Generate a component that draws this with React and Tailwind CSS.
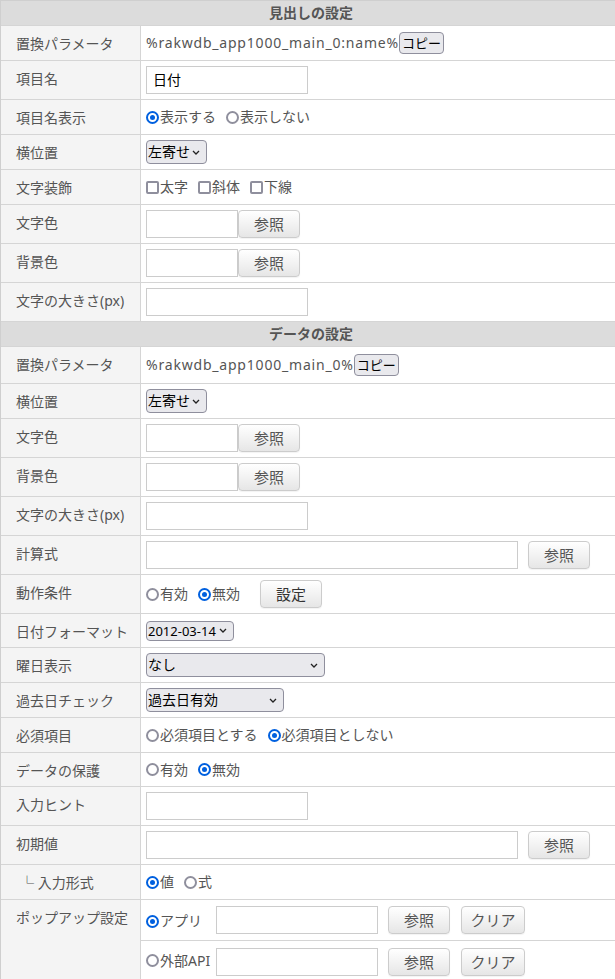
import React from 'react';

const Row = ({ label, h, indent, children }) => {
  return (
    <div className={`flex border-b border-[#d5d5d5] ${h}`}>
      <div className={`w-[140px] shrink-0 border-r border-[#d5d5d5] bg-[#f4f4f4] pt-[8px] leading-[20px] text-[#555] ${indent ? 'pl-[19px]' : 'pl-[15px]'}`}>
        {label}
      </div>
      <div className="flex flex-1 items-center px-[5px] text-[#555]">{children}</div>
    </div>
  );
};

const Header = ({ title }) => (
  <div className="flex h-[25px] items-center justify-center border-b border-[#d5d5d5] bg-[#dcdcdc] font-bold text-[#555]">
    {title}
  </div>
);

const Radio = ({ checked, label }) => (
  <span className="inline-flex items-center">
    {checked ? (
      <span className="flex size-[13px] items-center justify-center rounded-full border-2 border-[#0060df] bg-white">
        <span className="size-[5px] rounded-full bg-[#0060df]" />
      </span>
    ) : (
      <span className="size-[13px] rounded-full border-2 border-[#8f8f9d] bg-white" />
    )}
    <span className="ml-[1px]">{label}</span>
  </span>
);

const Check = ({ label }) => (
  <span className="inline-flex items-center">
    <span className="size-[13px] rounded-[2px] border-2 border-[#8f8f9d] bg-white" />
    <span className="ml-[1px]">{label}</span>
  </span>
);

const Chevron = () => (
  <svg width="8" height="5" viewBox="0 0 8 5" fill="none" stroke="#222" strokeWidth="1.3">
    <path d="M1 1l3 3 3-3" />
  </svg>
);

const Select = ({ value, w, h, small }) => (
  <div className={`flex items-center justify-between whitespace-nowrap rounded-[4px] border border-[#8f8f9d] bg-[#e9e9ed] pl-[1px] pr-[6px] text-black ${small ? 'text-[13px]' : ''} ${w} ${h}`}>
    <span>{value}</span>
    <Chevron />
  </div>
);

const Input = ({ w, value }) => (
  <div className={`h-[28px] shrink-0 border border-[#ccc] bg-white pl-[6px] leading-[26px] text-black ${w}`}>{value}</div>
);

const Btn = ({ label, w, dark }) => (
  <button className={`h-[28px] shrink-0 rounded-[4px] border border-[#ccc] bg-linear-to-b from-white to-[#e6e6e6] text-[15px] leading-[26px] shadow-[0_1px_1px_rgba(0,0,0,0.05)] ${dark ? 'text-[#333]' : 'text-[#555]'} ${w}`}>
    {label}
  </button>
);

const Copy = () => (
  <button className="h-[22px] rounded-[4px] border border-[#8f8f9d] bg-[#e9e9ed] px-[2px] text-[13px] leading-[20px] text-black">
    コピー
  </button>
);

const App = () => {
  return (
    <div className="w-[615px] overflow-hidden bg-white">
      <div className="w-[621px] border-t border-l border-[#cfcfcf] font-['Noto_Sans','Noto_Sans_CJK_JP',sans-serif] text-[14px] leading-[20px]">
        <Header title="見出しの設定" />
        <Row label="置換パラメータ" h="h-[35px]">
          <span className="tracking-[0.8px]">%rakwdb_app1000_main_0:name%</span>
          <Copy />
        </Row>
        <Row label="項目名" h="h-[39px]">
          <Input w="w-[162px]" value="日付" />
        </Row>
        <Row label="項目名表示" h="h-[35px]">
          <div className="flex gap-[10px]">
            <Radio checked label="表示する" />
            <Radio label="表示しない" />
          </div>
        </Row>
        <Row label="横位置" h="h-[35px]">
          <Select value="左寄せ" w="w-[61px]" h="h-[24px]" />
        </Row>
        <Row label="文字装飾" h="h-[35px]">
          <div className="flex gap-[10px]">
            <Check label="太字" />
            <Check label="斜体" />
            <Check label="下線" />
          </div>
        </Row>
        <Row label="文字色" h="h-[39px]">
          <Input w="w-[92px]" />
          <Btn label="参照" w="w-[62px]" />
        </Row>
        <Row label="背景色" h="h-[39px]">
          <Input w="w-[92px]" />
          <Btn label="参照" w="w-[62px]" />
        </Row>
        <Row label="文字の大きさ(px)" h="h-[39px]">
          <Input w="w-[162px]" />
        </Row>

        <Header title="データの設定" />
        <Row label="置換パラメータ" h="h-[37px]">
          <span className="tracking-[0.8px]">%rakwdb_app1000_main_0%</span>
          <Copy />
        </Row>
        <Row label="横位置" h="h-[35px]">
          <Select value="左寄せ" w="w-[61px]" h="h-[24px]" />
        </Row>
        <Row label="文字色" h="h-[39px]">
          <Input w="w-[92px]" />
          <Btn label="参照" w="w-[62px]" />
        </Row>
        <Row label="背景色" h="h-[39px]">
          <Input w="w-[92px]" />
          <Btn label="参照" w="w-[62px]" />
        </Row>
        <Row label="文字の大きさ(px)" h="h-[39px]">
          <Input w="w-[162px]" />
        </Row>
        <Row label="計算式" h="h-[39px]">
          <Input w="w-[372px]" />
          <div className="ml-[10px]">
            <Btn label="参照" w="w-[62px]" />
          </div>
        </Row>
        <Row label="動作条件" h="h-[39px]">
          <div className="flex gap-[10px]">
            <Radio label="有効" />
            <Radio checked label="無効" />
          </div>
          <div className="ml-[20px]">
            <Btn label="設定" w="w-[62px]" dark />
          </div>
        </Row>
        <Row label="日付フォーマット" h="h-[34px]">
          <Select value="2012-03-14" w="w-[88px]" h="h-[20px]" small />
        </Row>
        <Row label="曜日表示" h="h-[35px]">
          <Select value="なし" w="w-[179px]" h="h-[24px]" />
        </Row>
        <Row label="過去日チェック" h="h-[35px]">
          <Select value="過去日有効" w="w-[138px]" h="h-[24px]" />
        </Row>
        <Row label="必須項目" h="h-[35px]">
          <div className="flex gap-[10px]">
            <Radio label="必須項目とする" />
            <Radio checked label="必須項目としない" />
          </div>
        </Row>
        <Row label="データの保護" h="h-[34px]">
          <div className="flex gap-[10px]">
            <Radio label="有効" />
            <Radio checked label="無効" />
          </div>
        </Row>
        <Row label="入力ヒント" h="h-[39px]">
          <Input w="w-[162px]" />
        </Row>
        <Row label="初期値" h="h-[39px]">
          <Input w="w-[372px]" />
          <div className="ml-[10px]">
            <Btn label="参照" w="w-[62px]" />
          </div>
        </Row>
        <Row label="└ 入力形式" h="h-[35px]" indent>
          <div className="flex gap-[10px]">
            <Radio checked label="値" />
            <Radio label="式" />
          </div>
        </Row>

        <div className="flex border-b border-[#d5d5d5]">
          <div className="w-[140px] shrink-0 border-r border-[#d5d5d5] bg-[#f4f4f4] pt-[8px] pl-[15px] leading-[20px] text-[#555]">
            ポップアップ設定
          </div>
          <div className="flex-1 text-[#555]">
            <div className="flex h-[41px] items-center border-b border-[#d5d5d5] px-[5px]">
              <div className="w-[70px] shrink-0">
                <Radio checked label="アプリ" />
              </div>
              <Input w="w-[162px]" />
              <div className="ml-[10px] flex gap-[11px]">
                <Btn label="参照" w="w-[62px]" />
                <Btn label="クリア" w="w-[64px]" />
              </div>
            </div>
            <div className="flex h-[41px] items-center px-[5px]">
              <div className="w-[70px] shrink-0">
                <Radio label="外部API" />
              </div>
              <Input w="w-[162px]" />
              <div className="ml-[10px] flex gap-[11px]">
                <Btn label="参照" w="w-[62px]" />
                <Btn label="クリア" w="w-[64px]" />
              </div>
            </div>
          </div>
        </div>
      </div>
    </div>
  );
};

export default App;
